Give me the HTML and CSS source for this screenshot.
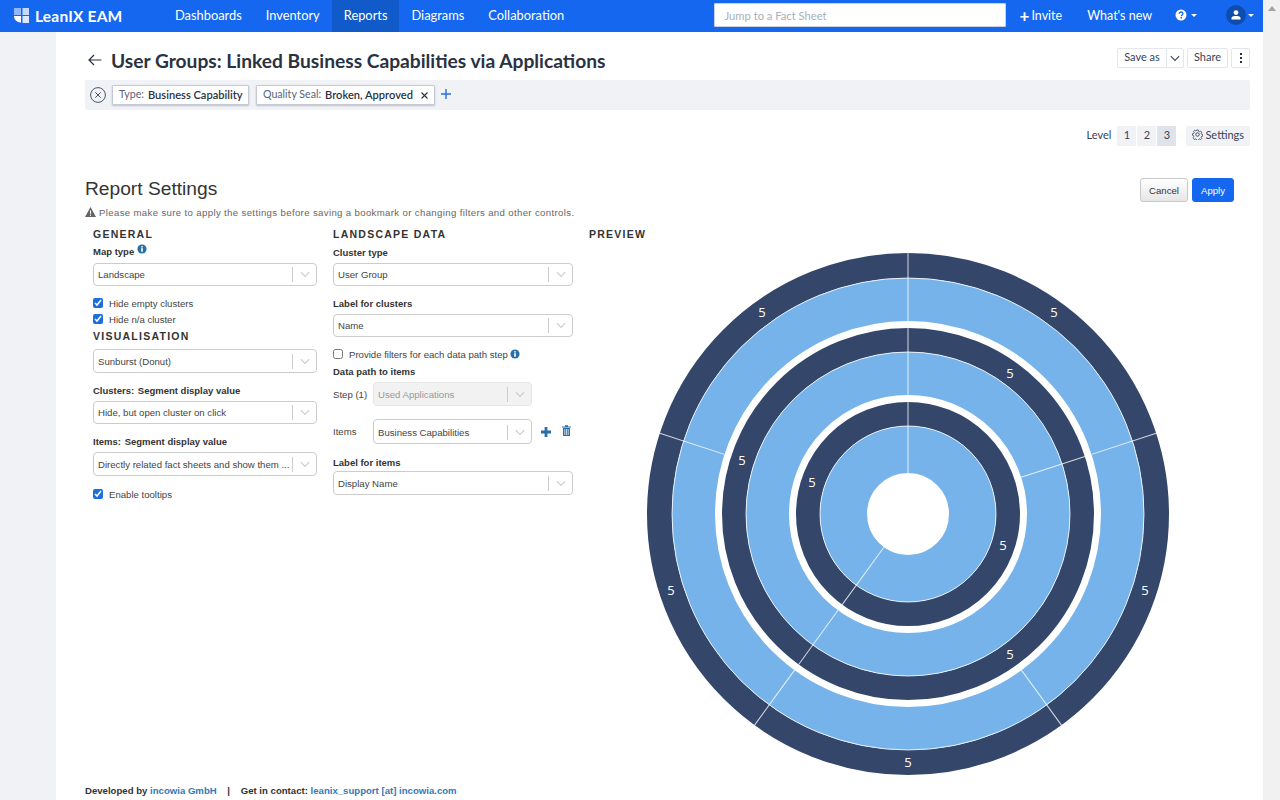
FILE: index.html
```html
<!DOCTYPE html>
<html lang="en">
<head>
  <meta charset="UTF-8">
  <meta name="viewport" content="width=device-width, initial-scale=1.0">
  <title>User Groups: Linked Business Capabilities via Applications</title>
  <link rel="stylesheet" href="styles.css">
</head>
<body>
  <svg class="defs" width="0" height="0">
    <symbol id="chevron" viewBox="0 0 12 8">
      <path d="M1 1.2 6 6.4 11 1.2" fill="none" stroke="currentColor" stroke-width="1.3"/>
    </symbol>
    <symbol id="info" viewBox="0 0 12 12">
      <circle cx="6" cy="6" r="5.5" fill="#2a6fa8"/>
      <rect x="5" y="5" width="2" height="4.2" fill="#fff"/>
      <rect x="5" y="2.6" width="2" height="1.6" fill="#fff"/>
    </symbol>
  </svg>

  <div class="page">
    <header class="navbar">
      <a class="brand">
        <svg class="brand-logo" viewBox="0 0 16 15">
          <path d="M0 0h7v7H0z" fill="#8fb8f8"/>
          <path d="M8.5 0H15v7H8.5z" fill="#c4dafc"/>
          <path d="M0 8h7v6.500A6.500 6.500 0 0 1 0 8z" fill="#fff"/>
          <path d="M8.500 8H15v7H8.500z" fill="#dbe8fd"/>
        </svg>
        <span>LeanIX EAM</span>
      </a>
      <nav class="nav-tabs">
        <a class="nav-tab">Dashboards</a>
        <a class="nav-tab">Inventory</a>
        <a class="nav-tab active">Reports</a>
        <a class="nav-tab">Diagrams</a>
        <a class="nav-tab">Collaboration</a>
      </nav>
      <div class="search">Jump to a Fact Sheet</div>
      <a class="nav-link invite"><span class="invite-plus">+</span>Invite</a>
      <a class="nav-link whats-new">What's new</a>
      <a class="nav-icon help">
        <svg width="12" height="12" viewBox="0 0 12 12">
          <circle cx="6" cy="6" r="5.500" fill="#fff"/>
          <path d="M4.200 4.700C4.200 3.600 5 3 6 3s1.900.6 1.900 1.600c0 1.300-1.500 1.300-1.500 2.600" fill="none" stroke="#1467ee" stroke-width="1.300"/>
          <rect x="5.500" y="8" width="1.500" height="1.500" fill="#1467ee"/>
        </svg>
        <span class="caret"></span>
      </a>
      <a class="nav-icon user">
        <span class="avatar">
          <svg width="10" height="10" viewBox="0 0 10 10">
            <circle cx="5" cy="2.600" r="2.400" fill="#fff"/>
            <path d="M.5 9.500V8C.5 6.600 2.500 6 5 6s4.500.6 4.500 2v1.500z" fill="#fff"/>
          </svg>
        </span>
        <span class="caret caret-user"></span>
      </a>
    </header>

    <div class="shell">
      <div class="gutter"></div>
      <main class="content">
        <div class="title-row">
          <svg class="back" width="14" height="12" viewBox="0 0 14 12">
            <path d="M13.500 6H1M6 1 1 6l5 5" fill="none" stroke="#2a3242" stroke-width="1.200"/>
          </svg>
          <h1 class="title">User Groups: Linked Business Capabilities via Applications</h1>
          <div class="actions">
            <div class="btn-split">
              <button class="btn save-as">Save as</button>
              <button class="btn save-caret"><svg width="10" height="7"><use href="#chevron"/></svg></button>
            </div>
            <button class="btn share">Share</button>
            <button class="btn kebab">
              <svg width="2" height="10" viewBox="0 0 2 10">
                <rect y="0" width="2" height="2" fill="#2a3242"/>
                <rect y="4" width="2" height="2" fill="#2a3242"/>
                <rect y="8" width="2" height="2" fill="#2a3242"/>
              </svg>
            </button>
          </div>
        </div>

        <div class="filter-bar">
          <svg class="filter-clear" width="16" height="16" viewBox="0 0 16 16">
            <circle cx="8" cy="8" r="7.400" fill="none" stroke="#4a5468"/>
            <path d="M5.300 5.300l5.400 5.400M10.700 5.300l-5.400 5.400" stroke="#4a5468"/>
          </svg>
          <div class="chip chip-type"><span class="chip-key">Type:</span> <b>Business Capability</b></div>
          <div class="chip chip-seal"><span class="chip-key">Quality Seal:</span> <b>Broken, Approved</b>
            <svg class="chip-x" width="7" height="7" viewBox="0 0 7 7"><path d="M.5.5l6 6M6.500.5l-6 6" stroke="#2a3242" stroke-width="1.100"/></svg>
          </div>
          <svg class="filter-add" width="10" height="10" viewBox="0 0 10 10"><path d="M5 0v10M0 5h10" stroke="#2a6fe0" stroke-width="1.400"/></svg>
        </div>

        <div class="level-row">
          <span class="level-label">Level</span>
          <div class="level-group">
            <button class="level-btn">1</button>
            <button class="level-btn">2</button>
            <button class="level-btn selected">3</button>
          </div>
          <button class="settings-btn">
            <svg width="11" height="11" viewBox="0 0 12 12">
              <circle cx="6" cy="6" r="1.900" fill="none" stroke="#3a4356"/>
              <path d="M5 .6h2l.3 1.500 1.200.5 1.300-.8 1.400 1.400-.8 1.300.5 1.200 1.500.3v2l-1.500.3-.5 1.200.8 1.300-1.400 1.400-1.300-.8-1.200.5-.3 1.500H5l-.3-1.500-1.200-.5-1.300.8L.8 9.800l.8-1.300-.5-1.200L0 7V5l1.500-.3.5-1.200-.8-1.300L2.600.8l1.300.8 1.200-.5z" transform="translate(.6 .6) scale(.9)" fill="none" stroke="#3a4356"/>
            </svg>
            Settings
          </button>
        </div>

        <section class="panel">
          <div class="panel-head">
            <h2 class="panel-title">Report Settings</h2>
            <div class="panel-buttons">
              <button class="btn-cancel">Cancel</button>
              <button class="btn-apply">Apply</button>
            </div>
          </div>
          <p class="warning">
            <svg width="11" height="10" viewBox="0 0 11 10">
              <path d="M5.500 0 11 10H0z" fill="#666"/>
              <rect x="5" y="3.400" width="1" height="3.400" fill="#fff"/>
              <rect x="5" y="7.600" width="1" height="1.200" fill="#fff"/>
            </svg>
            Please make sure to apply the settings before saving a bookmark or changing filters and other controls.
          </p>

          <div class="columns">
            <div class="col col-general">
              <h3 class="section-title">GENERAL</h3>
              <label class="field-label mt-3">Map type <svg class="raised" width="10" height="10"><use href="#info"/></svg></label>
              <div class="select mt-5"><span class="select-value">Landscape</span><span class="select-sep"></span><svg class="select-chevron"><use href="#chevron"/></svg></div>
              <label class="check mt-9"><input type="checkbox" checked>Hide empty clusters</label>
              <label class="check"><input type="checkbox" checked>Hide n/a cluster</label>
              <h3 class="section-title mt-2">VISUALISATION</h3>
              <div class="select select-tall mt-6"><span class="select-value">Sunburst (Donut)</span><span class="select-sep"></span><svg class="select-chevron"><use href="#chevron"/></svg></div>
              <label class="field-label mt-11">Clusters: <span class="spaced">Segment display value</span></label>
              <div class="select mt-3"><span class="select-value">Hide, but open cluster on click</span><span class="select-sep"></span><svg class="select-chevron"><use href="#chevron"/></svg></div>
              <label class="field-label mt-11">Items: <span class="spaced">Segment display value</span></label>
              <div class="select select-tall mt-3"><span class="select-value">Directly related fact sheets and show them ...</span><span class="select-sep"></span><svg class="select-chevron"><use href="#chevron"/></svg></div>
              <label class="check mt-10"><input type="checkbox" checked>Enable tooltips</label>
            </div>

            <div class="col col-data">
              <h3 class="section-title">LANDSCAPE DATA</h3>
              <label class="field-label mt-5">Cluster type</label>
              <div class="select mt-3"><span class="select-value">User Group</span><span class="select-sep"></span><svg class="select-chevron"><use href="#chevron"/></svg></div>
              <label class="field-label mt-11">Label for clusters</label>
              <div class="select mt-3"><span class="select-value">Name</span><span class="select-sep"></span><svg class="select-chevron"><use href="#chevron"/></svg></div>
              <label class="check mt-9"><input type="checkbox">Provide filters for each data path step <svg class="info-icon" width="10" height="10"><use href="#info"/></svg></label>
              <label class="field-label mt-3">Data path to items</label>
              <div class="path-row mt-3">
                <span class="path-label">Step (1)</span>
                <div class="select select-tall disabled"><span class="select-value">Used Applications</span><span class="select-sep"></span><svg class="select-chevron"><use href="#chevron"/></svg></div>
              </div>
              <div class="path-row mt-13">
                <span class="path-label">Items</span>
                <div class="select select-taller"><span class="select-value">Business Capabilities</span><span class="select-sep"></span><svg class="select-chevron"><use href="#chevron"/></svg></div>
                <svg class="path-add" width="10" height="10" viewBox="0 0 10 10"><path d="M5 0v10M0 5h10" stroke="#2a6fa8" stroke-width="2.800"/></svg>
                <svg class="path-trash" width="9" height="11" viewBox="0 0 9 11">
                  <path d="M0 1.500h9v1H0zM3 .3h3v1.200H3z" fill="#2a6fa8"/>
                  <path d="M1 3h7v8H1z" fill="#2a6fa8"/>
                  <path d="M2.800 4v6M4.500 4v6M6.200 4v6" stroke="#fff" stroke-width=".7"/>
                </svg>
              </div>
              <label class="field-label mt-12">Label for items</label>
              <div class="select select-tall mt-1"><span class="select-value">Display Name</span><span class="select-sep"></span><svg class="select-chevron"><use href="#chevron"/></svg></div>
            </div>

            <div class="col col-preview">
              <h3 class="section-title">PREVIEW</h3>
              <svg class="sunburst" width="524" height="524" viewBox="-262 -262 524 524">
                <g fill="none">
                  <circle r="248.500" stroke="#34466a" stroke-width="25"/>
                  <circle r="214.500" stroke="#75b3ea" stroke-width="43"/>
                  <circle r="174" stroke="#34466a" stroke-width="24"/>
                  <circle r="140.500" stroke="#75b3ea" stroke-width="43"/>
                  <circle r="100" stroke="#34466a" stroke-width="24"/>
                  <circle r="64.500" stroke="#75b3ea" stroke-width="47"/>
                  <g class="seams">
                    <circle r="236"/>
                    <circle r="162"/>
                    <circle r="88"/>
                  </g>
                </g>
                <g class="seams">
                  <path d="M0-261V-193" transform="rotate(0)"/>
                  <path d="M0-261V-193" transform="rotate(72)"/>
                  <path d="M0-261V-193" transform="rotate(144)"/>
                  <path d="M0-261V-193" transform="rotate(216)"/>
                  <path d="M0-261V-193" transform="rotate(288)"/>
                  <path d="M0-186V-119" transform="rotate(0)"/>
                  <path d="M0-186V-119" transform="rotate(72)"/>
                  <path d="M0-186V-119" transform="rotate(216)"/>
                  <path d="M0-112V-41" transform="rotate(0)"/>
                  <path d="M0-112V-41" transform="rotate(216)"/>
                </g>
                <g class="ring-labels">
                  <text x="146" y="-197">5</text>
                  <text x="237" y="81">5</text>
                  <text x="0" y="253">5</text>
                  <text x="-237" y="81">5</text>
                  <text x="-146" y="-197">5</text>
                  <text x="102" y="-136">5</text>
                  <text x="102" y="145">5</text>
                  <text x="-166" y="-49">5</text>
                  <text x="95" y="36">5</text>
                  <text x="-96" y="-27">5</text>
                </g>
              </svg>
            </div>
          </div>
        </section>

        <footer class="footer">
          Developed by <a class="footer-link">incowia GmbH</a>
          <span class="footer-sep">|</span>
          Get in contact: <a class="footer-link">leanix_support [at] incowia.com</a>
        </footer>
      </main>
    </div>
  </div>

  <div class="scrollbar"><span class="scroll-arrow"></span></div>
</body>
</html>
```

FILE: styles.css
```css
* {
  box-sizing: border-box;
}
html, body {
  height: 100%;
}
body {
  display: flex;
  height: 800px;
  margin: 0;
  overflow: hidden;
  font-family: "Liberation Sans", Arial, sans-serif;
  font-size: 9.600px;
  color: #333;
  background-color: #fff;
}
button {
  font: inherit;
  cursor: pointer;
}
.defs {
  position: absolute;
}
.page {
  display: flex;
  flex-direction: column;
  width: 1263px;
}
.scrollbar {
  display: flex;
  justify-content: center;
  width: 17px;
  padding-top: 6px;
  background-color: #f1f1f1;
}
.scroll-arrow {
  width: 0;
  height: 0;
  border: 4px solid transparent;
  border-top: 0;
  border-bottom: 5px solid #a3a3a3;
}

/* top bar */
.navbar {
  display: flex;
  align-items: center;
  height: 32px;
  flex: none;
  color: #fff;
  background-color: #1467ee;
  font-family: Lato, sans-serif;
  font-size: 12.500px;
}
.brand {
  display: flex;
  align-items: center;
  width: 163px;
  padding-left: 14px;
  padding-bottom: 1px;
  font-size: 15.500px;
  font-weight: 700;
  letter-spacing: .2px;
}
.brand-logo {
  width: 16px;
  height: 15px;
  margin-right: 5px;
}
.nav-tabs {
  display: flex;
  height: 100%;
  font-size: 12.850px;
}
.nav-tab {
  display: flex;
  align-items: center;
  padding: 0 12px 2px;
}
.nav-tab.active {
  background-color: #105ac9;
}
.search {
  display: flex;
  align-items: center;
  flex: none;
  width: 292px;
  height: 24px;
  margin: 0 0 2px auto;
  padding-left: 10px;
  border: 1px solid #c9d2df;
  border-radius: 1px;
  background-color: #fff;
  color: #a7afbc;
  font-size: 11.200px;
}
.nav-link {
  display: flex;
  align-items: center;
  padding-bottom: 2px;
}
.invite {
  margin-left: 14px;
}
.invite-plus {
  margin-right: 2px;
  font-size: 17px;
  font-weight: 700;
  line-height: 1;
}
.whats-new {
  margin-left: 25px;
}
.nav-icon {
  display: flex;
  align-items: center;
  padding-bottom: 2px;
}
.help {
  margin-left: 23px;
}
.user {
  margin-left: 29px;
  margin-right: 9px;
}
.caret {
  width: 0;
  height: 0;
  margin-left: 4px;
  border: 3px solid transparent;
  border-top: 3px solid #fff;
  border-bottom: 0;
}
.caret-user {
  margin-left: 2px;
}
.avatar {
  display: flex;
  align-items: center;
  justify-content: center;
  width: 20px;
  height: 20px;
  border-radius: 50%;
  background-color: #0f4cb0;
}

/* page frame */
.shell {
  display: flex;
  flex: 1;
}
.gutter {
  width: 56px;
  background-color: #f0f2f6;
}
.content {
  flex: 1;
  padding: 14px 13px 0 29px;
}

/* title row */
.title-row {
  display: flex;
  align-items: center;
  height: 28px;
  font-family: Lato, sans-serif;
}
.back {
  margin-left: 3px;
}
.title {
  margin: 0 0 0 9px;
  color: #2a3242;
  font-size: 19.200px;
  font-weight: 700;
}
.actions {
  display: flex;
  align-items: center;
  align-self: flex-start;
  gap: 3px;
  margin-top: 2px;
  margin-left: auto;
}
.btn-split {
  display: flex;
}
.btn {
  height: 20px;
  padding: 0 0 4px;
  border: 1px solid #e3e6ec;
  border-radius: 2px;
  background-color: #fff;
  color: #3a4356;
  font-size: 11px;
}
.save-as {
  width: 49px;
  border-right: 0;
  border-radius: 2px 0 0 2px;
}
.save-caret {
  display: flex;
  align-items: center;
  justify-content: center;
  width: 18px;
  padding-bottom: 0;
  border-radius: 0 2px 2px 0;
}
.share {
  width: 41px;
}
.kebab {
  display: flex;
  align-items: center;
  justify-content: center;
  width: 19px;
  padding-bottom: 0;
}

/* filters */
.filter-bar {
  display: flex;
  align-items: center;
  height: 30px;
  margin-top: 6px;
  padding-left: 5px;
  border-radius: 2px;
  background-color: #f0f2f6;
  font-family: Lato, sans-serif;
  font-size: 10.600px;
  color: #2a3242;
}
.chip {
  display: flex;
  align-items: center;
  gap: 4px;
  height: 20px;
  padding: 0 0 2px 6px;
  border: 1px solid #c4c9d4;
  border-radius: 1px;
  background-color: #fff;
  box-shadow: 0 1px 2px rgba(40, 50, 70, .25);
  white-space: nowrap;
}
.chip b {
  font-size: 11.100px;
  font-weight: 600;
}
.chip-type {
  width: 137px;
  margin-left: 6px;
}
.chip-seal {
  width: 179px;
  margin-left: 7px;
}
.chip-key {
  color: #5a6375;
}
.chip-x {
  margin-left: 4px;
  margin-top: 2px;
}
.filter-add {
  margin-left: 6px;
  margin-bottom: 2px;
}

/* level */
.level-row {
  display: flex;
  align-items: center;
  justify-content: flex-end;
  height: 20px;
  margin-top: 16px;
  font-family: Lato, sans-serif;
  font-size: 11px;
  color: #3a4356;
}
.level-label {
  padding-bottom: 3px;
}
.level-group {
  display: flex;
  gap: 1px;
  margin-left: 6px;
}
.level-btn {
  width: 19px;
  height: 20px;
  padding: 0 0 4px;
  border: 0;
  background-color: #f0f2f6;
  color: inherit;
}
.level-btn.selected {
  background-color: #dfe3ea;
}
.settings-btn {
  display: flex;
  align-items: center;
  gap: 2px;
  height: 20px;
  margin-left: 10px;
  padding: 0 6px 3px;
  border: 0;
  border-radius: 2px;
  background-color: #f0f2f6;
  color: inherit;
}

/* report settings */
.panel {
  margin-top: 32px;
  padding-right: 16px;
}
.panel-head {
  display: flex;
  align-items: center;
  justify-content: space-between;
}
.panel-title {
  margin: 0 0 3px;
  color: #333;
  font-size: 19.200px;
  font-weight: 400;
  line-height: 20px;
}
.panel-buttons {
  display: flex;
  gap: 4px;
}
.btn-cancel, .btn-apply {
  height: 24px;
  padding: 0;
  border-radius: 3px;
}
.btn-cancel {
  width: 48px;
  border: 1px solid #c8c8c8;
  background: linear-gradient(#fff, #e6e6e6);
  color: #333;
}
.btn-apply {
  width: 42px;
  border: 1px solid #1467ee;
  background-color: #1467ee;
  color: #fff;
}
.warning {
  display: flex;
  align-items: center;
  gap: 3px;
  height: 14px;
  margin: 3px 0 0;
  color: #666;
  letter-spacing: .36px;
}
.columns {
  display: flex;
  margin-top: 8px;
}
.col {
  padding: 0 8px;
}
.col-general {
  width: 240px;
}
.col-data {
  width: 256px;
}
.col-preview {
  flex: 1;
}
.section-title {
  height: 14px;
  margin: 0;
  color: #333;
  font-size: 10.500px;
  font-weight: 700;
  letter-spacing: 1.250px;
  line-height: 14px;
}
.field-label {
  display: block;
  height: 14px;
  color: #333;
  font-size: 9.500px;
  font-weight: 700;
  line-height: 14px;
}
.spaced {
  margin-left: 1px;
}
.select {
  display: flex;
  align-items: center;
  height: 23px;
  border: 1px solid #ccc;
  border-radius: 4px;
  background-color: #fff;
  color: #444;
}
.select-tall {
  height: 24px;
}
.select-taller {
  height: 25px;
  padding-top: 2px;
}
.select-value {
  flex: 1;
  min-width: 0;
  padding-left: 4px;
  overflow: hidden;
  white-space: nowrap;
}
.select-sep {
  width: 1px;
  height: 15px;
  margin-left: 3px;
  background-color: #ccc;
}
.select-chevron {
  width: 10px;
  height: 7px;
  margin: 0 6px 0 7px;
  color: #ccc;
}
.select.disabled {
  background-color: #f2f2f2;
  border-color: #e6e6e6;
  color: #999;
}
.check {
  display: flex;
  align-items: center;
  height: 16px;
  color: #444;
}
.check input {
  width: 10px;
  height: 10px;
  margin: 0 6px 0 0;
  accent-color: #1a6fe0;
}
.info-icon {
  margin-left: 2px;
}
.raised {
  vertical-align: 1px;
}
.path-row {
  display: flex;
  align-items: center;
  color: #444;
}
.path-row .select {
  width: 159px;
}
.path-label {
  width: 40px;
}
.path-add {
  margin-left: 9px;
}
.path-trash {
  margin-left: 11px;
  margin-top: -3px;
}
.sunburst {
  display: block;
  margin: 11px auto 0;
}
.seams {
  fill: none;
  stroke: #fff;
  stroke-width: 1;
  stroke-opacity: .8;
}
.ring-labels {
  fill: #fff;
  font-family: "Open Sans", sans-serif;
  font-size: 13px;
  text-anchor: middle;
}
.footer {
  margin-top: 8px;
  color: #333;
  font-size: 9.600px;
  font-weight: 700;
  line-height: 14px;
  white-space: nowrap;
}
.footer-link {
  color: #337ab7;
}
.footer-sep {
  margin: 0 8px;
}

.mt-1 { margin-top: 1px; }
.mt-2 { margin-top: 2px; }
.mt-3 { margin-top: 3px; }
.mt-5 { margin-top: 5px; }
.mt-6 { margin-top: 6px; }
.mt-9 { margin-top: 9px; }
.mt-10 { margin-top: 10px; }
.mt-11 { margin-top: 11px; }
.mt-12 { margin-top: 12px; }
.mt-13 { margin-top: 13px; }
```
